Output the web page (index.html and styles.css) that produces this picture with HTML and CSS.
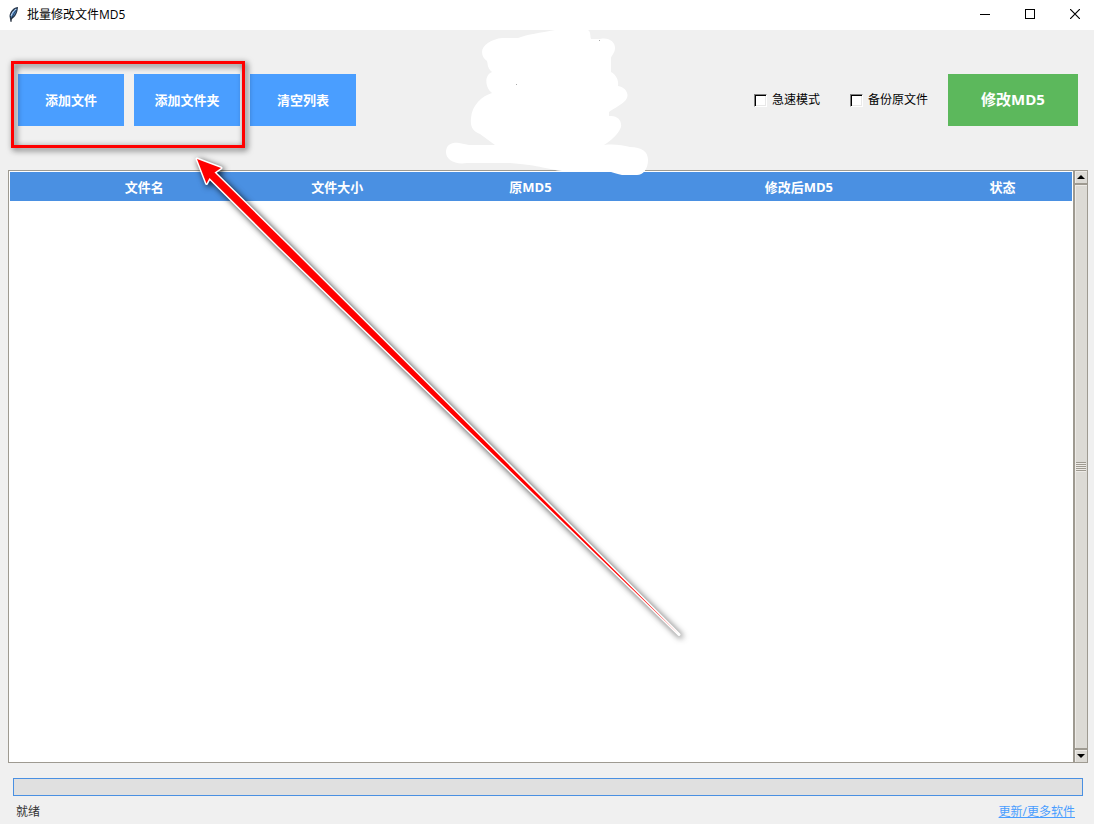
FILE: index.html
```html
<!DOCTYPE html>
<html lang="zh-CN">
<head>
    <meta charset="UTF-8">
    <meta name="viewport" content="width=device-width, initial-scale=1.0">
    <title>批量修改文件MD5</title>
    <link rel="stylesheet" href="styles.css">
</head>
<body>
    <header class="title-bar">
        <svg class="app-icon" width="12" height="18" viewBox="0 0 12 18">
            <path d="M10 1C6 1 2 5 1.500 10l.5 3 .5 3 1-3c4-2 6-6 6.500-12z" fill="#26364a"/>
            <path d="M9 2.500C6 4 3.500 7 3 12c3-2 5-5 6-9.500z" fill="#5a9be0"/>
            <path d="M8.500 4C6 7 4 10 3 16" fill="none" stroke="#16202c" stroke-width=".8"/>
            <path d="M8 3C5 5 4 7 3 10" fill="none" stroke="#c5dcf5"/>
        </svg>
        <h1 class="title">批量修改文件MD5</h1>
        <div class="window-buttons">
            <button type="button" class="window-button" aria-label="最小化">
                <svg width="10" height="10" viewBox="0 0 10 10" shape-rendering="crispEdges"><path d="M0 5.5h10" stroke="#000"/></svg>
            </button>
            <button type="button" class="window-button" aria-label="最大化">
                <svg width="10" height="10" viewBox="0 0 10 10" shape-rendering="crispEdges"><path d="M.5 .5h9v9h-9z" fill="none" stroke="#000"/></svg>
            </button>
            <button type="button" class="window-button" aria-label="关闭">
                <svg width="10" height="10" viewBox="0 0 10 10"><path d="M0 0l10 10M10 0L0 10" stroke="#000" stroke-width="1.2"/></svg>
            </button>
        </div>
    </header>

    <div class="toolbar">
        <button type="button" class="tool-button">添加文件</button>
        <button type="button" class="tool-button">添加文件夹</button>
        <button type="button" class="tool-button">清空列表</button>
        <div class="options">
            <label class="option"><input type="checkbox" class="checkbox">急速模式</label>
            <label class="option"><input type="checkbox" class="checkbox">备份原文件</label>
            <button type="button" class="submit-button">修改MD5</button>
        </div>
    </div>

    <main class="list">
        <div class="list-box">
            <table class="file-table">
                <colgroup>
                    <col class="col-wide">
                    <col class="col-size">
                    <col class="col-wide">
                    <col class="col-wide">
                    <col class="col-state">
                </colgroup>
                <thead>
                    <tr>
                        <th>文件名</th>
                        <th>文件大小</th>
                        <th>原MD5</th>
                        <th>修改后MD5</th>
                        <th>状态</th>
                    </tr>
                </thead>
                <tbody></tbody>
            </table>
        </div>
        <div class="scrollbar">
            <button type="button" class="scroll-button" aria-label="向上滚动">
                <svg width="8" height="4" viewBox="0 0 8 4"><path d="M0 4l4-4 4 4z"/></svg>
            </button>
            <div class="scroll-thumb"><span class="grip"></span></div>
            <button type="button" class="scroll-button" aria-label="向下滚动">
                <svg width="8" height="4" viewBox="0 0 8 4"><path d="M0 0l4 4 4-4z"/></svg>
            </button>
        </div>
    </main>

    <footer class="footer">
        <progress class="progress" value="0" max="100" aria-label="进度"></progress>
        <div class="status">
            <span>就绪</span>
            <a href="#" class="more-link">更新/更多软件</a>
        </div>
    </footer>

    <!-- hand-drawn notes over the window -->
    <svg class="notes" width="700" height="660" viewBox="0 0 700 660" aria-hidden="true">
        <path class="scribble" d="M482 52C482 45 492 39 502 38L518 38C528 34 540 33 555 30L588 30C591 32 590 36 591 39L600 39C609 37 615 42 615 48C615 53 611 56 611 58L611 72C615 74 619 79 618 86C625 87 629 93 627 98C624 104 614 108 609 112L609 116C618 115 622 121 621 127C618 135 610 141 604 145C614 144 622 145 630 147C642 147 648 152 648 160C648 169 643 175 637 175L622 175C616 174 612 172 608 171L562 171C550 170 540 165 510 163L467 163C455 165 446 160 446 152C446 144 453 142 459 143L469 145L495 145L480 134C473 131 470 127 471 118C472 105 482 96 492 93C485 88 484 75 492 72C487 68 488 64 487 61C484 59 482 56 482 52Z"/>
        <path class="speck" d="M516 84h1v1h-1zM599 40h1v1h-1z"/>
        <rect class="frame" x="12.5" y="62.5" width="231" height="84"/>
        <path class="arrow" d="M197 159L221 168L214.500 172.500L288 245L679 634.500L279 247L209.500 178L206.500 183.500Z"/>
    </svg>
</body>
</html>
```

FILE: styles.css
```css
* {
    margin: 0;
    padding: 0;
    box-sizing: border-box;
}

body {
    display: flex;
    flex-direction: column;
    min-height: 100vh;
    font-family: "Open Sans", "Noto Sans CJK SC", sans-serif;
    font-size: 12px;
    line-height: 16px;
    color: #000;
    background-color: #f0f0f0;
}

button {
    border: none;
    font-family: inherit;
    cursor: pointer;
}

.title-bar {
    display: flex;
    align-items: center;
    height: 30px;
    padding-left: 8px;
    background-color: white;
}

.app-icon {
    margin-right: 7px;
}

.title {
    font-size: 12px;
    font-weight: normal;
}

.window-buttons {
    display: flex;
    margin-left: auto;
    margin-top: -2px;
}

.window-button {
    display: flex;
    align-items: center;
    justify-content: center;
    width: 45px;
    height: 28px;
    background-color: transparent;
}

.window-button:last-child {
    width: 46px;
    margin-right: -4px;
}

.window-button:hover {
    background-color: #e5e5e5;
}

.toolbar {
    display: flex;
    align-items: center;
    gap: 10px;
    height: 140px;
    padding: 0 16px 0 18px;
}

.tool-button {
    width: 106px;
    height: 52px;
    padding-bottom: 2px;
    font-size: 13px;
    font-weight: bold;
    color: white;
    background-color: #4a9eff;
}

.options {
    display: flex;
    align-items: center;
    margin-left: auto;
}

.option {
    display: flex;
    align-items: center;
    gap: 5px;
    margin-right: 20px;
}

.option:first-child {
    margin-right: 30px;
}

.checkbox {
    appearance: none;
    width: 13px;
    height: 13px;
    border: 1px solid;
    border-color: #808080 white white #808080;
    background-color: white;
    box-shadow: inset 1px 1px #000, inset -1px -1px #e8e8e8;
}

.checkbox:checked {
    background-color: #4a9eff;
}

.submit-button {
    width: 130px;
    height: 52px;
    padding-bottom: 4px;
    font-size: 15px;
    font-weight: bold;
    color: white;
    background-color: #5cb85c;
}

.list {
    display: flex;
    flex: 1;
    padding: 0 6px 0 8px;
}

.list-box {
    flex: 1;
    padding: 1px;
    border: 1px solid #9e9a91;
    border-right: none;
    background-color: white;
}

.file-table {
    width: 100%;
    table-layout: fixed;
    border-collapse: collapse;
}

.file-table th {
    height: 29px;
    font-size: 13px;
    font-weight: bold;
    color: white;
    background-color: #4a90e2;
}

.col-size {
    width: 118px;
}

.col-state {
    width: 139px;
}

.scrollbar {
    display: flex;
    flex-direction: column;
    width: 15px;
    border: 1px solid #9e9a91;
    border-left-width: 2px;
    background-color: #dcdad5;
}

.scroll-button {
    display: flex;
    align-items: center;
    justify-content: center;
    height: 12px;
    background-color: #dcdad5;
    box-shadow: inset 1px 1px #eeebe7;
}

.scroll-thumb {
    display: flex;
    flex: 1;
    align-items: center;
    justify-content: center;
    border: solid #9e9a91;
    border-width: 2px 0;
    box-shadow: inset 1px 1px #eeebe7;
}

.grip {
    width: 10px;
    height: 10px;
    background: repeating-linear-gradient(#9e9a91 0 1px, #eeebe7 1px 2px);
}

.footer {
    padding: 15px 11px 0 13px;
}

.progress {
    display: block;
    appearance: none;
    width: 100%;
    height: 18px;
    border: 1px solid #4a90e2;
    background-color: #e0e0e0;
}

.progress::-webkit-progress-bar {
    background-color: #e0e0e0;
}

.progress::-webkit-progress-value {
    background-color: #4a90e2;
}

.status {
    display: flex;
    align-items: center;
    justify-content: space-between;
    height: 28px;
    padding: 3px 8px 0 3px;
    color: #333;
}

.more-link {
    color: #4a9eff;
}

.notes {
    position: absolute;
    top: 0;
    left: 0;
    pointer-events: none;
}

.scribble {
    fill: white;
}

.speck {
    fill: #aaa;
}

.frame {
    fill: none;
    stroke: #f00;
    stroke-width: 3px;
    filter: drop-shadow(2px 2px 3px rgba(0, 0, 0, 0.7));
}

.arrow {
    fill: #f00;
    stroke: white;
    stroke-width: 3px;
    stroke-linejoin: round;
    paint-order: stroke;
    filter: drop-shadow(2px 2px 3px rgba(0, 0, 0, 0.8));
}
```
